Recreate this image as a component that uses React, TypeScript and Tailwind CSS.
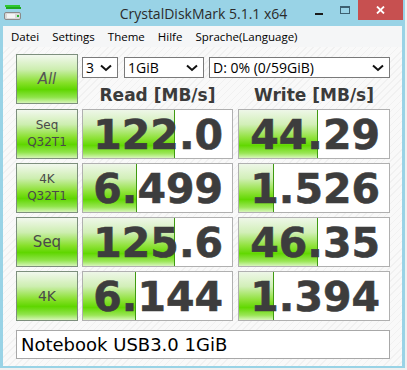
import React from 'react';

// --- Data ---
interface ResultRow {
    label: string[];
    labelSize: string;
    read: string;
    write: string;
    readFill: number;
    writeFill: number;
}

const rows: ResultRow[] = [
    { label: ['Seq', 'Q32T1'], labelSize: 'text-[12px]', read: '122.0', write: '44.29', readFill: 92, writeFill: 79 },
    { label: ['4K', 'Q32T1'], labelSize: 'text-[12px]', read: '6.499', write: '1.526', readFill: 54, writeFill: 35 },
    { label: ['Seq'], labelSize: 'text-[15px]', read: '125.6', write: '46.35', readFill: 92, writeFill: 79 },
    { label: ['4K'], labelSize: 'text-[14px]', read: '6.144', write: '1.394', readFill: 53, writeFill: 35 },
];

const menuItems = ['Datei', 'Settings', 'Theme', 'Hilfe', 'Sprache(Language)'];

// --- Small pieces ---
const Chevron = () => (
    <svg width="12" height="8" viewBox="0 0 12 8" className="shrink-0">
        <polyline points="1,1.5 6,6 11,1.5" fill="none" stroke="#111" strokeWidth="2" />
    </svg>
);

const SelectBox: React.FC<{ value: string; className: string }> = ({ value, className }) => (
    <div className={`h-[21px] bg-white border border-[#7a7a7a] flex items-center justify-between pl-[3px] pr-[5px] ${className}`}>
        <span className="text-[14px] leading-none text-black font-['Open_Sans',sans-serif]">{value}</span>
        <Chevron />
    </div>
);

const LabelBox: React.FC<{ lines: string[]; size: string }> = ({ lines, size }) => (
    <div className="w-[62px] h-[50px] border border-[#7d8f7d] bg-[linear-gradient(to_bottom,#f2f8ee_0%,#cdeeb0_30%,#86e028_58%,#5fd600_72%,#8fe44a_88%,#d6f5b8_100%)] flex flex-col items-center justify-center">
        {lines.map(l => (
            <span key={l} className={`${size} leading-[17px] text-[#4a4a4a] font-['DejaVu_Sans',sans-serif]`}>{l}</span>
        ))}
    </div>
);

const ValueBox: React.FC<{ value: string; fill: number; width: string }> = ({ value, fill, width }) => (
    <div className={`relative h-[50px] border border-[#b0b0b0] bg-white ${width}`}>
        <div
            className="absolute left-0 top-0 bottom-0 border-r border-[#3f9a10] bg-[linear-gradient(to_bottom,#eef7e8_0%,#d2efb8_30%,#8fe23a_58%,#62d802_74%,#9ae656_90%,#d8f6bc_100%)]"
            style={{ width: fill }}
        />
        <div className="relative h-full flex items-center justify-end pr-[9px] pt-[2px]">
            <span className="text-[41px] leading-none font-bold text-[#3d3d3d] font-['DejaVu_Sans',sans-serif] [-webkit-text-stroke:0.6px_#3d3d3d]">{value}</span>
        </div>
    </div>
);

const AppIcon = () => (
    <svg width="18" height="16" viewBox="0 0 18 16">
        <rect x="1" y="0" width="15" height="2" fill="#2fc82f" />
        <rect x="2" y="2" width="15" height="2" fill="#1ea81e" />
        <rect x="0.5" y="7.5" width="16" height="7" rx="1.5" fill="#d8d8d8" stroke="#8a8a8a" />
        <rect x="3" y="9" width="8" height="4" fill="#f4f4f4" />
        <rect x="13" y="10" width="2" height="2" fill="#2fb52f" />
    </svg>
);

export default function App() {
    return (
        <div className="w-[407px] h-[370px] bg-[#f0f0f0] overflow-hidden">
            <div className="w-[405px] h-[368px] bg-[#99d3e6] flex flex-col">
                {/* Title bar */}
                <div className="h-[26px] flex items-start relative">
                    <div className="absolute left-[4px] top-[5px]">
                        <AppIcon />
                    </div>
                    <div className="flex-1 h-[26px] flex items-center justify-center">
                        <span className="text-[14px] text-[#2b2b2b] font-['Open_Sans',sans-serif] pl-[2px]">CrystalDiskMark 5.1.1 x64</span>
                    </div>
                    <div className="absolute right-[2px] top-0 flex items-start">
                        <div className="w-[26px] h-[20px] flex items-center justify-center">
                            <div className="w-[8px] h-[2px] bg-[#1a1a1a] mt-[8px]" />
                        </div>
                        <div className="w-[26px] h-[20px] flex items-center justify-center">
                            <div className="w-[10px] h-[8px] border border-[#3d5f70] border-t-2" />
                        </div>
                        <div className="w-[45px] h-[20px] bg-[#c75050] flex items-center justify-center">
                            <svg width="9" height="8" viewBox="0 0 9 8">
                                <path d="M1 0.5 L8 7.5 M8 0.5 L1 7.5" stroke="#fff" strokeWidth="1.8" />
                            </svg>
                        </div>
                    </div>
                </div>

                {/* Menu + content */}
                <div className="mx-[3px] flex-1 flex flex-col">
                    <div className="h-[21px] bg-[#f5f6f7] flex items-center gap-[13px] pl-[8px] text-[11.5px] text-black font-['Open_Sans',sans-serif]">
                        {menuItems.map(m => (
                            <span key={m}>{m}</span>
                        ))}
                    </div>

                    <div className="flex-1 bg-[repeating-linear-gradient(135deg,#f9f9f9_0px,#f9f9f9_4px,#f1f1f1_4px,#f1f1f1_5px)] pl-[13px] pt-[7px]">
                        {/* Top row */}
                        <div className="flex">
                            <div className="w-[62px] h-[50px] border border-[#7d8f7d] bg-[linear-gradient(to_bottom,#f2f8ee_0%,#cdeeb0_30%,#86e028_58%,#5fd600_72%,#8fe44a_88%,#d6f5b8_100%)] flex items-center justify-center">
                                <span className="text-[15px] text-[#555] italic font-['DejaVu_Sans',sans-serif]">All</span>
                            </div>
                            <div className="ml-[4px] w-[308px] flex flex-col">
                                <div className="flex mt-[3px]">
                                    <SelectBox value="3" className="w-[36px]" />
                                    <SelectBox value="1GiB" className="w-[80px] ml-[6px]" />
                                    <SelectBox value="D: 0% (0/59GiB)" className="w-[181px] ml-[5px]" />
                                </div>
                                <div className="flex mt-[7px]">
                                    <div className="w-[151px] text-center text-[17px] leading-[20px] font-bold text-[#3b3b3b] font-['DejaVu_Sans',sans-serif]">Read [MB/s]</div>
                                    <div className="w-[152px] ml-[5px] text-center text-[17px] leading-[20px] font-bold text-[#3b3b3b] font-['DejaVu_Sans',sans-serif]">Write [MB/s]</div>
                                </div>
                            </div>
                        </div>

                        {/* Results */}
                        <div className="flex flex-col gap-[4px] mt-[4px]">
                            {rows.map(r => (
                                <div key={r.label.join() + r.read} className="flex">
                                    <LabelBox lines={r.label} size={r.labelSize} />
                                    <div className="ml-[4px]">
                                        <ValueBox value={r.read} fill={r.readFill} width="w-[151px]" />
                                    </div>
                                    <div className="ml-[5px]">
                                        <ValueBox value={r.write} fill={r.writeFill} width="w-[152px]" />
                                    </div>
                                </div>
                            ))}
                        </div>

                        {/* Comment */}
                        <div className="mt-[9px] w-[374px] h-[29px] bg-white border border-[#a8a8a8] flex items-center pl-[4px]">
                            <span className="text-[18px] text-black font-['DejaVu_Sans',sans-serif]">Notebook USB3.0 1GiB</span>
                        </div>
                    </div>
                    <div className="h-[2px]" />
                </div>
            </div>
        </div>
    );
}
